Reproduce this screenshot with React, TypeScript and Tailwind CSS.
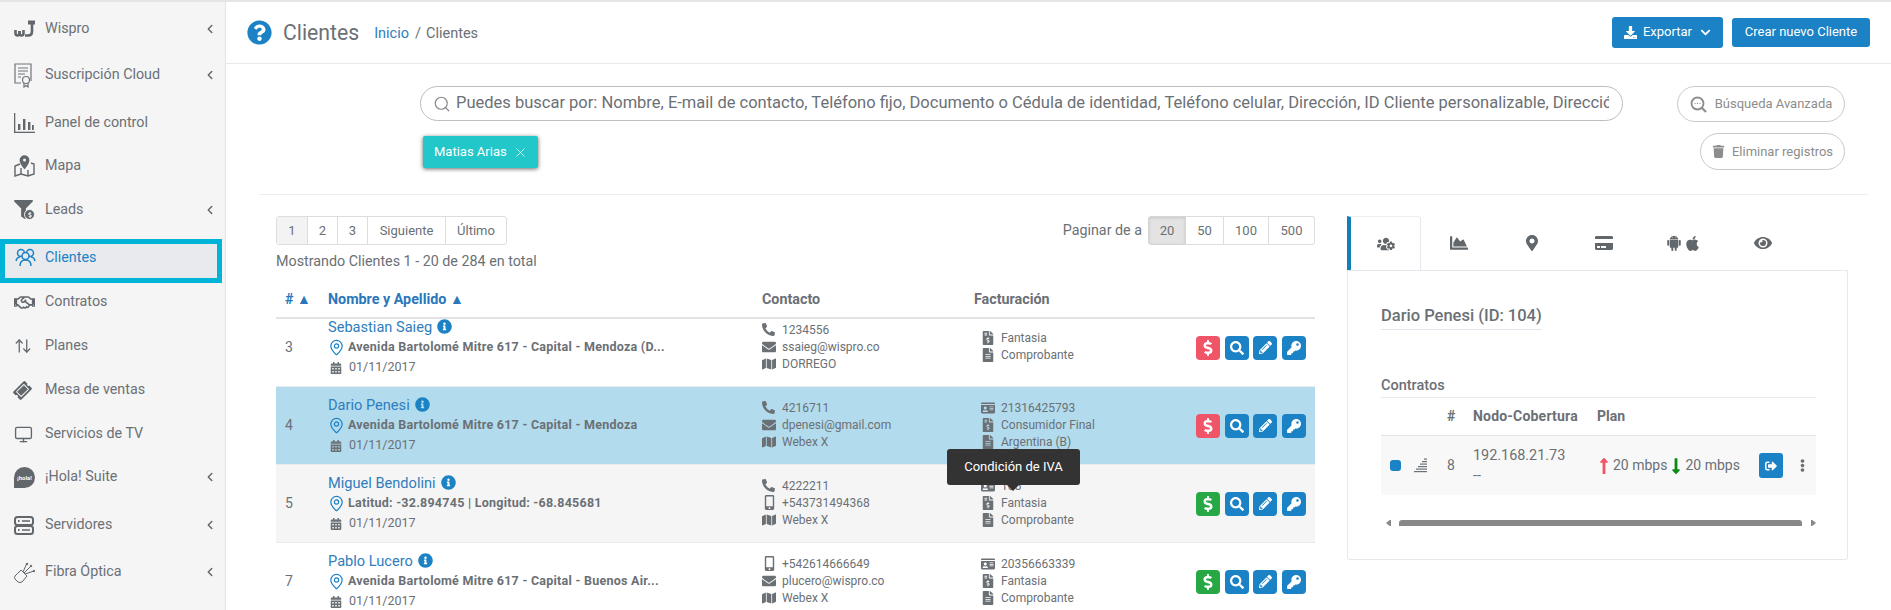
import type { ReactNode } from "react";
import { ChevronLeft, ArrowUpDown, Monitor, Search, X, MapPin } from "lucide-react";
import { AiFillAndroid } from "react-icons/ai";
import {
  FaApple,
  FaCalendarAlt,
  FaChartArea,
  FaChevronDown,
  FaCreditCard,
  FaDollarSign,
  FaDownload,
  FaEllipsisV,
  FaEnvelope,
  FaEye,
  FaFileAlt,
  FaFileInvoiceDollar,
  FaFilter,
  FaIdCard,
  FaInfoCircle,
  FaKey,
  FaLongArrowAltDown,
  FaLongArrowAltUp,
  FaMap,
  FaMapMarkerAlt,
  FaMobileAlt,
  FaPencilAlt,
  FaPhoneAlt,
  FaQuestionCircle,
  FaRegHandshake,
  FaSearch,
  FaSignOutAlt,
  FaTicketAlt,
  FaTrash,
  FaUsersCog,
} from "react-icons/fa";

function WisproIcon() {
  return (
    <svg width="22" height="18" viewBox="0 0 22 18" fill="none" stroke="#62676b" strokeWidth="2.600">
      <path d="M1.500 10v3q0 2.500 2 2.500t2-2.500v-2" />
      <path d="M5.500 11v2q0 2.500 2 2.500t2-2.500v-3" />
      <path d="M11 15.500h3q4 0 4-4V4" />
      <path d="M14 2.500h7" strokeWidth="4" />
    </svg>
  );
}

function CertIcon() {
  return (
    <svg width="18" height="25" viewBox="0 0 18 25" fill="none" stroke="#70757a" strokeWidth="1.200">
      <path d="M7 20H1V1h16v17" />
      <path d="M4 5h10M4 8h10M4 11h7M4 14h3" />
      <circle cx="12" cy="17" r="3.500" />
      <path d="M10 20v4l2-1.500 2 1.500v-4" />
    </svg>
  );
}

function ChartIcon() {
  return (
    <svg width="21" height="20" viewBox="0 0 21 20" fill="#62676b">
      <rect x="0" y="0" width="1.300" height="20" />
      <rect x="0" y="18.700" width="21" height="1.300" />
      <rect x="4" y="11" width="2.400" height="6" />
      <rect x="9" y="6" width="2.400" height="11" />
      <rect x="14" y="9" width="2.400" height="8" />
      <rect x="18" y="12" width="1.800" height="5" />
    </svg>
  );
}

function MapIcon() {
  return (
    <svg width="21" height="22" viewBox="0 0 21 22" fill="none" stroke="#62676b" strokeWidth="1.400">
      <path d="M6 9 1 11v10l6-2 7 2 6-2V9l-3-1" />
      <path d="M7 13v6M14 15v6" />
      <path d="M10.500 1a4.200 4.200 0 0 1 4.200 4.200c0 3-4.200 8-4.200 8s-4.200-5-4.200-8A4.200 4.200 0 0 1 10.500 1Z" fill="#62676b" />
      <circle cx="10.500" cy="5" r="1.500" fill="#f5f5f5" stroke="none" />
    </svg>
  );
}

function LeadsIcon() {
  return (
    <span className="relative block h-[20px] w-[21px]">
      <FaFilter size={19} className="text-[#62676b]" />
      <span className="absolute right-0 bottom-0 flex h-[11px] w-[11px] items-center justify-center rounded-full border border-[#f5f5f5] bg-[#62676b]">
        <FaDollarSign size={6} className="text-white" />
      </span>
    </span>
  );
}

function PeopleIcon() {
  return (
    <svg width="21" height="19" viewBox="0 0 21 19" fill="none" stroke="#1b82c5" strokeWidth="1.500">
      <circle cx="6" cy="5" r="3.500" />
      <circle cx="15" cy="5" r="3.500" />
      <path d="M1 13q1-4 4-4" />
      <path d="M20 13q-1-4-4-4" />
      <circle cx="10.500" cy="8" r="3.500" fill="#e8eaed" />
      <path d="M5 18q0-6 5.500-6t5.500 6" />
    </svg>
  );
}

function HolaIcon() {
  return (
    <span className="flex h-[21px] w-[21px] items-center justify-center rounded-full rounded-bl-none bg-[#62676b] text-[6px] font-bold text-white">
      ¡hola!
    </span>
  );
}

function ServerIcon() {
  return (
    <svg width="20" height="19" viewBox="0 0 20 19" fill="none" stroke="#62676b" strokeWidth="2">
      <rect x="1" y="1" width="18" height="8" rx="2.500" />
      <rect x="1" y="10" width="18" height="8" rx="2.500" />
      <path d="M4 5h1.500M4 14h1.500" />
      <path d="M8 5h8M8 14h8" strokeWidth="1.500" />
    </svg>
  );
}

function FiberIcon() {
  return (
    <svg width="21" height="21" viewBox="0 0 21 21" fill="none" stroke="#62676b" strokeWidth="1">
      <path d="m1 14 6-6 6 6-5 6q-2 1-4 0l-3-3q-1-1 0-3Z" />
      <path d="M9 10 13 1M10 11 17 4M11 12l9-3" />
      <circle cx="13" cy="2" r=".8" fill="#62676b" />
      <circle cx="17" cy="4" r=".8" fill="#62676b" />
      <circle cx="20" cy="9" r=".8" fill="#62676b" />
    </svg>
  );
}

function SignalIcon() {
  return (
    <svg width="13" height="15" viewBox="0 0 13 15" fill="#6b7075">
      <rect x="0" y="13" width="13" height="1.200" />
      <rect x="2" y="10.500" width="11" height="1.200" />
      <rect x="4" y="8" width="9" height="1.200" />
      <rect x="6" y="5.500" width="7" height="1.200" />
      <rect x="8" y="3" width="5" height="1.200" />
      <rect x="10" y="0.500" width="3" height="1.200" />
    </svg>
  );
}

function SearchDotsIcon() {
  return (
    <svg width="17" height="17" viewBox="0 0 17 17" fill="none" stroke="#8d8d8d" strokeWidth="1.800">
      <circle cx="7.500" cy="7.500" r="6" />
      <path d="m12 12 4 4" strokeWidth="2.200" />
      <path d="M4.500 7.500h1M7 7.500h1M9.500 7.500h1" strokeWidth="1.200" />
    </svg>
  );
}

const menu = [
  { label: "Wispro", icon: <WisproIcon />, arrow: true, gap: "mt-[9px]" },
  { label: "Suscripción Cloud", icon: <CertIcon />, arrow: true, gap: "mt-[10px]" },
  { label: "Panel de control", icon: <ChartIcon />, gap: "mt-[12px]" },
  { label: "Mapa", icon: <MapIcon />, gap: "mt-[7px]" },
  { label: "Leads", icon: <LeadsIcon />, arrow: true, gap: "mt-[8px]" },
  { label: "Clientes", icon: <PeopleIcon />, active: true, gap: "mt-[11px]" },
  { label: "Contratos", icon: <FaRegHandshake size={21} className="text-[#62676b]" />, gap: "mt-[1px]" },
  { label: "Planes", icon: <ArrowUpDown size={18} strokeWidth={1.7} className="text-[#62676b]" />, gap: "mt-[8px]" },
  { label: "Mesa de ventas", icon: <FaTicketAlt size={17} className="-rotate-45 text-[#62676b]" />, gap: "mt-[8px]" },
  { label: "Servicios de TV", icon: <Monitor size={19} strokeWidth={1.7} className="text-[#62676b]" />, gap: "mt-[8px]" },
  { label: "¡Hola! Suite", icon: <HolaIcon />, arrow: true, gap: "mt-[7px]" },
  { label: "Servidores", icon: <ServerIcon />, arrow: true, gap: "mt-[12px]" },
  { label: "Fibra Óptica", icon: <FiberIcon />, arrow: true, gap: "mt-[11px]" },
];

function Sidebar() {
  return (
    <aside className="h-full w-[226px] shrink-0 border-r border-[#e4e4e4] bg-[#f5f5f5] text-[14.3px] text-[#6b7075]">
      {menu.map((item) =>
        item.active ? (
          <div
            key={item.label}
            className={`${item.gap} flex h-[44px] w-[222px] border-[5px] border-[#00b4d8] bg-[#e8eaed] text-[#1b82c5]`}
          >
            <div className="flex h-[27px] items-center">
              <span className="flex w-[40px] justify-center">{item.icon}</span>
              <span>{item.label}</span>
            </div>
          </div>
        ) : (
          <div key={item.label} className={`${item.gap} flex h-[36px] items-center pl-[14px]`}>
            <span className="flex w-[31px] shrink-0 justify-start">{item.icon}</span>
            <span className="flex-1">{item.label}</span>
            {item.arrow && <ChevronLeft size={14} strokeWidth={2.5} className="mr-[8px] text-[#62676b]" />}
          </div>
        ),
      )}
    </aside>
  );
}

function TopBar() {
  return (
    <header className="flex h-[62px] items-center justify-between border-b border-[#e9e9e9] pr-[21px] pl-[21px] text-[#6b7075]">
      <div className="flex items-center">
        <FaQuestionCircle size={25} className="text-[#1b82c5]" />
        <h1 className="ml-[11px] text-[21.2px] leading-none">Clientes</h1>
        <span className="mt-[2px] ml-[15px] text-[14.5px] text-[#2f7dbd]">Inicio</span>
        <span className="mt-[2px] ml-[6px] text-[14.5px]">/</span>
        <span className="mt-[2px] ml-[5px] text-[14.5px]">Clientes</span>
      </div>
      <div className="-mt-[1px] flex items-center text-[13px] text-white">
        <button className="flex h-[31px] w-[111px] items-center justify-center gap-[6px] rounded-[3px] bg-[#1b82c5]">
          <FaDownload size={13} />
          Exportar
          <FaChevronDown size={11} className="ml-[2px]" />
        </button>
        <button className="ml-[9px] h-[29px] w-[138px] rounded-[3px] bg-[#1b82c5]">Crear nuevo Cliente</button>
      </div>
    </header>
  );
}

function SearchBlock() {
  return (
    <section className="mr-[23px] ml-[33px] flex border-b border-[#ececec] pt-[22px] pr-[23px] pb-[24px] pl-[161px]">
      <div className="w-[1203px]">
        <div className="flex h-[35px] items-center rounded-full border border-[#bdbdbd] pr-[13px] pl-[12px] text-[16.5px] text-[#6b7075]">
          <Search size={18} strokeWidth={1.6} className="mr-[5px] shrink-0 text-[#8a8a8a]" />
          <span className="overflow-hidden whitespace-nowrap">
            Puedes buscar por: Nombre, E-mail de contacto, Teléfono fijo, Documento o Cédula de identidad, Teléfono celular, Dirección, ID Cliente personalizable, Dirección
          </span>
        </div>
        <div className="mt-[15px] ml-[3px] flex h-[32px] w-[115px] items-center rounded-[2px] bg-[#22c7c9] pl-[11px] text-[13px] text-white shadow-[0_1px_4px_rgba(0,0,0,0.6)]">
          Matias Arias
          <X size={15} strokeWidth={1.3} className="ml-[6px]" />
        </div>
      </div>
      <div className="flex flex-1 flex-col items-end text-[13px] text-[#8d8d8d]">
        <button className="flex h-[36px] w-[168px] items-center justify-center gap-[8px] rounded-full border border-[#c9c9c9]">
          <SearchDotsIcon />
          Búsqueda Avanzada
        </button>
        <button className="mt-[11px] flex h-[37px] w-[145px] items-center justify-center gap-[7px] rounded-full border border-[#c9c9c9]">
          <FaTrash size={13} />
          Eliminar registros
        </button>
      </div>
    </section>
  );
}

function Pager() {
  return (
    <div className="flex items-center justify-between text-[13px] text-[#6b7075]">
      <div className="flex h-[29px] rounded-[3px] border border-[#dddddd]">
        <span className="flex w-[30px] items-center justify-center bg-[#f3f3f3]">1</span>
        <span className="flex w-[30px] items-center justify-center border-l border-[#dddddd]">2</span>
        <span className="flex w-[30px] items-center justify-center border-l border-[#dddddd]">3</span>
        <span className="flex w-[78px] items-center justify-center border-l border-[#dddddd]">Siguiente</span>
        <span className="flex w-[61px] items-center justify-center border-l border-[#dddddd]">Último</span>
      </div>
      <div className="flex items-center">
        <span className="mr-[6px] text-[14.3px]">Paginar de a</span>
        <span className="flex h-[29px] w-[38px] items-center justify-center rounded-l-[3px] border border-[#d5d5d5] bg-[#e3e3e3] shadow-[inset_0_1px_3px_rgba(0,0,0,0.12)]">20</span>
        <span className="flex h-[29px] w-[38px] items-center justify-center border-y border-r border-[#dddddd]">50</span>
        <span className="flex h-[29px] w-[45px] items-center justify-center border-y border-r border-[#dddddd]">100</span>
        <span className="flex h-[29px] w-[46px] items-center justify-center rounded-r-[3px] border-y border-r border-[#dddddd]">500</span>
      </div>
    </div>
  );
}

function Line({ icon, text }: { icon: ReactNode; text: string }) {
  return (
    <div className="flex h-[17px] items-center">
      <span className="flex w-[20px] shrink-0 justify-start text-[#6b7075]">{icon}</span>
      <span className="whitespace-nowrap">{text}</span>
    </div>
  );
}

const phone = <FaPhoneAlt size={13} />;
const mail = <FaEnvelope size={14} />;
const zone = <FaMap size={14} />;
const mobile = <FaMobileAlt size={15} />;
const idCard = <FaIdCard size={14} />;
const fileDollar = <FaFileInvoiceDollar size={14} />;
const fileText = <FaFileAlt size={14} />;

const rows = [
  {
    id: 3,
    name: "Sebastian Saieg",
    address: "Avenida Bartolomé Mitre 617 - Capital - Mendoza (D...",
    contact: [
      { icon: phone, text: "1234556" },
      { icon: mail, text: "ssaieg@wispro.co" },
      { icon: zone, text: "DORREGO" },
    ],
    billing: [
      { icon: fileDollar, text: "Fantasia" },
      { icon: fileText, text: "Comprobante" },
    ],
    paid: false,
    tone: "-mt-[10px] bg-white",
  },
  {
    id: 4,
    name: "Dario Penesi",
    address: "Avenida Bartolomé Mitre 617 - Capital - Mendoza",
    contact: [
      { icon: phone, text: "4216711" },
      { icon: mail, text: "dpenesi@gmail.com" },
      { icon: zone, text: "Webex X" },
    ],
    billing: [
      { icon: idCard, text: "21316425793" },
      { icon: fileDollar, text: "Consumidor Final" },
      { icon: fileText, text: "Argentina (B)" },
    ],
    paid: false,
    tone: "bg-[#b2dbed]",
  },
  {
    id: 5,
    name: "Miguel Bendolini",
    address: "Latitud: -32.894745 | Longitud: -68.845681",
    contact: [
      { icon: phone, text: "4222211" },
      { icon: mobile, text: "+543731494368" },
      { icon: zone, text: "Webex X" },
    ],
    billing: [
      { icon: idCard, text: "105" },
      { icon: fileDollar, text: "Fantasia" },
      { icon: fileText, text: "Comprobante" },
    ],
    paid: true,
    tone: "bg-[#f5f5f5]",
  },
  {
    id: 7,
    name: "Pablo Lucero",
    address: "Avenida Bartolomé Mitre 617 - Capital - Buenos Air...",
    contact: [
      { icon: mobile, text: "+542614666649" },
      { icon: mail, text: "plucero@wispro.co" },
      { icon: zone, text: "Webex X" },
    ],
    billing: [
      { icon: idCard, text: "20356663339" },
      { icon: fileDollar, text: "Fantasia" },
      { icon: fileText, text: "Comprobante" },
    ],
    paid: true,
    tone: "bg-white",
  },
];

function ActionButton({ color, children }: { color: string; children: ReactNode }) {
  return <span className={`flex h-[24px] w-[24px] items-center justify-center rounded-[4px] text-white ${color}`}>{children}</span>;
}

function ClientsTable() {
  return (
    <div className="relative mt-[12px] text-[#6b7075]">
      <div className="flex h-[37px] items-center border-b-2 border-[#e2e2e2] text-[14.3px] font-bold">
        <span className="w-[52px] pl-[9px] text-[#2a77bb]">
          # <span className="text-[14px]">▲</span>
        </span>
        <span className="w-[434px] text-[#2a77bb]">
          Nombre y Apellido <span className="text-[14px]">▲</span>
        </span>
        <span className="w-[212px]">Contacto</span>
        <span>Facturación</span>
      </div>
      <div className="h-[291px] overflow-hidden">
        {rows.map((row) => (
          <div key={row.id} className={`flex h-[78px] items-center border-b border-[#e8ecee] ${row.tone}`}>
            <span className="w-[52px] shrink-0 pl-[9px] text-[14px]">{row.id}</span>
            <div className="-mt-[1px] w-[434px] shrink-0">
              <div className="flex h-[21px] items-center pt-[2px] text-[14.6px] text-[#2f7dbd]">
                {row.name}
                <FaInfoCircle size={15} className="mb-[3px] ml-[5px] text-[#1b82c5]" />
              </div>
              <div className="flex h-[20px] items-center text-[12.5px] font-bold tracking-[0.25px]">
                <MapPin size={17} strokeWidth={1.7} className="mr-[3px] text-[#1b82c5]" />
                {row.address}
              </div>
              <div className="flex h-[20px] items-center text-[12.5px]">
                <FaCalendarAlt size={12} className="mr-[7px] ml-[2px]" />
                01/11/2017
              </div>
            </div>
            <div className="-mt-[2px] w-[219px] shrink-0 text-[12px]">
              {row.contact.map((line) => (
                <Line key={line.text} icon={line.icon} text={line.text} />
              ))}
            </div>
            <div className="-mt-[2px] w-[215px] shrink-0 text-[12px]">
              {row.billing.map((line) => (
                <Line key={line.text} icon={line.icon} text={line.text} />
              ))}
            </div>
            <div className="flex gap-[4.7px]">
              <ActionButton color={row.paid ? "bg-[#28a745]" : "bg-[#ef5467]"}>
                <FaDollarSign size={16} />
              </ActionButton>
              <ActionButton color="bg-[#1b82c5]">
                <FaSearch size={14} />
              </ActionButton>
              <ActionButton color="bg-[#1b82c5]">
                <FaPencilAlt size={13} />
              </ActionButton>
              <ActionButton color="bg-[#1b82c5]">
                <FaKey size={14} />
              </ActionButton>
            </div>
          </div>
        ))}
      </div>
      <div className="absolute top-[167px] left-[671px] z-10 flex h-[36px] w-[133px] items-center justify-center rounded-[3px] bg-[#333333] text-[13px] text-white">
        Condición de IVA
        <span className="absolute top-full left-[60px] border-x-[6px] border-t-[6px] border-x-transparent border-t-[#333333]" />
      </div>
    </div>
  );
}

function Tabs() {
  const tab = "flex h-[54px] items-center justify-center";
  return (
    <div className="flex h-[55px] w-[501px] border-b border-[#e6e8ee] text-[#62676b]">
      <div className={`${tab} w-[74px] rounded-tr-[3px] border-t border-r border-l-4 border-t-[#eeeeee] border-r-[#e6e8ee] border-l-[#1180b8] bg-white`}>
        <FaUsersCog size={18} />
      </div>
      <div className={`${tab} w-[75px]`}>
        <FaChartArea size={18} />
      </div>
      <div className={`${tab} w-[72px]`}>
        <FaMapMarkerAlt size={16} />
      </div>
      <div className={`${tab} w-[71px]`}>
        <FaCreditCard size={18} />
      </div>
      <div className={`${tab} w-[88px] gap-[1px]`}>
        <AiFillAndroid size={18} />
        <FaApple size={17} />
      </div>
      <div className={`${tab} w-[72px]`}>
        <FaEye size={18} />
      </div>
    </div>
  );
}

function DetailPanel() {
  return (
    <div className="h-[289px] w-[501px] rounded-b-[3px] border-r border-b border-l border-[#e6e8ee] pt-[35px] pl-[33px] text-[#6b7075]">
      <div className="w-fit border-b border-[#e2e5ec] pb-[3px] text-[16.500px] leading-[20px] font-medium">Dario Penesi (ID: 104)</div>
      <div className="mt-[46px] w-[435px] border-b border-[#e9e9e9] pb-[2px] text-[14.500px] leading-[19px] font-medium">Contratos</div>
      <div className="w-[435px] overflow-hidden">
        <div className="flex h-[38px] items-center border-b border-[#e2e2e2] text-[14px] font-bold">
          <span className="w-[66px]" />
          <span className="w-[26px]">#</span>
          <span className="w-[124px] tracking-[0.2px]">Nodo-Cobertura</span>
          <span>Plan</span>
        </div>
        <div className="flex h-[59px] items-center bg-[#f8f8f8] text-[14px]">
          <span className="ml-[9px] h-[11px] w-[11px] rounded-[3px] bg-[#1b82c5]" />
          <span className="ml-[13px] flex w-[33px]">
            <SignalIcon />
          </span>
          <span className="w-[26px]">8</span>
          <div className="w-[124px] text-[14.4px] leading-[20px]">
            <div className="whitespace-nowrap">192.168.21.73</div>
            <div>--</div>
          </div>
          <FaLongArrowAltUp size={18} className="-ml-[2px] text-[#ef5467]" />
          <span className="whitespace-nowrap">20 mbps</span>
          <FaLongArrowAltDown size={18} className="text-[#0a8a12]" />
          <span className="whitespace-nowrap">20 mbps</span>
          <span className="ml-[19px] flex h-[25px] w-[24px] shrink-0 items-center justify-center rounded-[3px] bg-[#1b82c5] text-white">
            <FaSignOutAlt size={12} />
          </span>
          <FaEllipsisV size={13} className="ml-[13px] shrink-0" />
        </div>
        <div className="mt-[25px] flex h-[6px] items-center overflow-hidden">
          <span className="ml-[5px] border-y-[4px] border-r-[5px] border-y-transparent border-r-[#888888]" />
          <span className="ml-[8px] h-[6px] w-[403px] rounded-t-[3px] bg-[#888888]" />
          <span className="ml-[9px] border-y-[4px] border-l-[5px] border-y-transparent border-l-[#888888]" />
        </div>
      </div>
    </div>
  );
}

export default function App() {
  return (
    <div className="flex h-[610px] w-[1891px] overflow-hidden border-t-2 border-[#e5e5e5] bg-white font-[Roboto,sans-serif]">
      <Sidebar />
      <main className="min-w-0 flex-1">
        <TopBar />
        <SearchBlock />
        <div className="mt-[21px] ml-[50px] flex">
          <section className="w-[1039px] shrink-0">
            <Pager />
            <p className="mt-[7px] text-[14.3px] leading-[18px] text-[#6b7075]">Mostrando Clientes 1 - 20 de 284 en total</p>
            <ClientsTable />
          </section>
          <section className="ml-[32px]">
            <Tabs />
            <DetailPanel />
          </section>
        </div>
      </main>
    </div>
  );
}
